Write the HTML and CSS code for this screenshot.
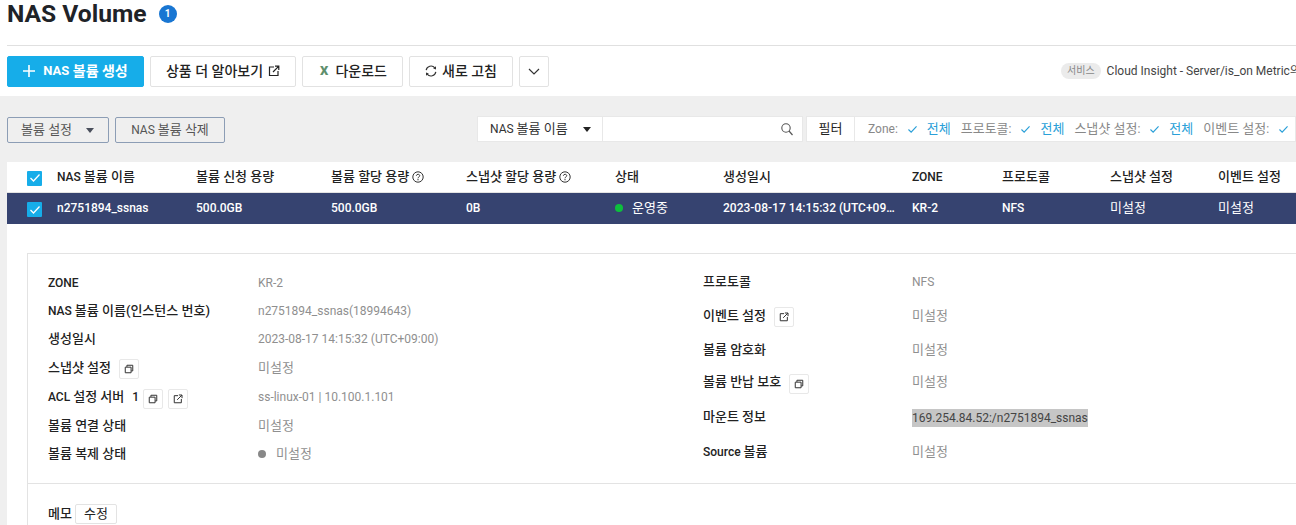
FILE: index.html
```html
<!DOCTYPE html>
<html lang="ko">
<head>
<meta charset="utf-8">
<title>NAS Volume</title>
<link rel="stylesheet" href="styles.css">
</head>
<body>
<svg class="defs" width="0" height="0">
  <defs>
    <symbol id="ext" viewBox="0 0 12 12"><path d="M6 2H1.500v8.500H10V6M7 1.200h3.800V5M10.600 1.400 5 7" fill="none" stroke="currentColor" stroke-width="1.200"/></symbol>
    <symbol id="copy" viewBox="0 0 12 12"><path d="M1.500 3.800h7v6.700h-7zM3.500 3.500V1.500h7v6.800H8.700" fill="none" stroke="currentColor" stroke-width="1.200"/></symbol>
    <symbol id="chk" viewBox="0 0 12 10"><path d="M1.500 5 4.500 8 10.500 1.500" fill="none" stroke="currentColor" stroke-width="1.300"/></symbol>
    <symbol id="help" viewBox="0 0 12 12"><circle cx="6" cy="6" r="5.200" fill="none" stroke="currentColor"/><path d="M4.400 4.800C4.400 2.800 7.700 2.800 7.700 4.700 7.700 6 6 5.900 6 7.300M6 8v1.300" fill="none" stroke="currentColor"/></symbol>
  </defs>
</svg>
<header class="title-bar">
  <h1 class="title">NAS Volume</h1>
  <span class="count">1</span>
</header>
<div class="toolbar">
  <button class="btn btn-primary"><svg class="plus" width="12" height="12" viewBox="0 0 12 12"><path d="M6 0v12M0 6h12" stroke="currentColor" stroke-width="1.600"/></svg><span class="lat">NAS</span>&nbsp;볼륨 생성</button>
  <button class="btn btn-learn">상품 더 알아보기<svg class="i12" width="12" height="12"><use href="#ext"/></svg></button>
  <button class="btn btn-down"><span class="xl">X</span>다운로드</button>
  <button class="btn btn-refresh"><svg class="i12" width="12" height="12" viewBox="0 0 12 12"><path d="M1.200 5.200A4.900 4.900 0 0 1 9.800 2.800M10.800 6.800A4.900 4.900 0 0 1 2.200 9.200" fill="none" stroke="#333" stroke-width="1.200"/><path d="M8.200 3.400 11 4.400V1.200zM3.800 8.600 1 7.600v3.200z" fill="#333"/></svg>새로 고침</button>
  <button class="btn btn-more"><svg width="12" height="7" viewBox="0 0 12 7"><path d="M1 1l5 5 5-5" fill="none" stroke="#333" stroke-width="1.200"/></svg></button>
  <div class="notice"><span class="pill">서비스</span><span class="notice-text">Cloud Insight - Server/is_on Metric의</span></div>
</div>
<main class="content">
  <div class="actions">
    <button class="act act-set"><span class="k">볼륨 설정</span><i class="caret"></i></button>
    <button class="act act-del">NAS <span class="k">볼륨 삭제</span></button>
    <div class="search">
      <div class="search-sel"><span>NAS <span class="k">볼륨 이름</span></span><i class="caret dark"></i></div>
      <div class="search-in"><svg width="12" height="13" viewBox="0 0 12 13"><circle cx="5" cy="5" r="4.200" fill="none" stroke="#555" stroke-width="1.100"/><path d="M8 8l3.500 4" stroke="#555" stroke-width="1.200"/></svg></div>
    </div>
    <div class="filter">
      <div class="filter-label k">필터</div>
      <div class="filter-items">
        <span class="f-name">Zone:</span><svg class="f-chk" width="11" height="9"><use href="#chk"/></svg><span class="f-val k">전체</span>
        <span class="f-name"><span class="k">프로토콜</span>:</span><svg class="f-chk" width="11" height="9"><use href="#chk"/></svg><span class="f-val k">전체</span>
        <span class="f-name"><span class="k">스냅샷 설정</span>:</span><svg class="f-chk" width="11" height="9"><use href="#chk"/></svg><span class="f-val k">전체</span>
        <span class="f-name"><span class="k">이벤트 설정</span>:</span><svg class="f-chk" width="11" height="9"><use href="#chk"/></svg>
      </div>
    </div>
  </div>
  <section class="panel">
    <div class="grid-row head">
      <span class="box"><svg width="12" height="10"><use href="#chk"/></svg></span>
      <span>NAS <span class="k">볼륨 이름</span></span><span class="k">볼륨 신청 용량</span>
      <span class="k">볼륨 할당 용량 <svg class="help" width="12" height="12"><use href="#help"/></svg></span>
      <span class="k">스냅샷 할당 용량 <svg class="help" width="12" height="12"><use href="#help"/></svg></span>
      <span class="k">상태</span><span class="k">생성일시</span><span>ZONE</span><span class="k">프로토콜</span><span class="k">스냅샷 설정</span><span class="k">이벤트 설정</span>
    </div>
    <div class="grid-row sel">
      <span class="box"><svg width="12" height="10"><use href="#chk"/></svg></span>
      <span>n2751894_ssnas</span><span>500.0GB</span><span>500.0GB</span><span>0B</span>
      <span class="state k"><i class="dot green"></i>운영중</span>
      <span class="ell">2023-08-17 14:15:32 (UTC+09:00)</span><span>KR-2</span><span>NFS</span><span class="k">미설정</span><span class="k">미설정</span>
    </div>
    <div class="detail">
      <div class="info">
        <dl class="col col-left">
          <div class="r"><dt>ZONE</dt><dd>KR-2</dd></div>
          <div class="r"><dt><span>NAS <span class="k">볼륨 이름(인스턴스 번호)</span></span></dt><dd>n2751894_ssnas(18994643)</dd></div>
          <div class="r"><dt class="k">생성일시</dt><dd>2023-08-17 14:15:32 (UTC+09:00)</dd></div>
          <div class="r"><dt class="k">스냅샷 설정<span class="ib ib-first"><svg width="10" height="10"><use href="#copy"/></svg></span></dt><dd class="k">미설정</dd></div>
          <div class="r"><dt><span>ACL <span class="k">설정 서버</span></span><b class="acl-n">1</b><span class="ib"><svg width="10" height="10"><use href="#copy"/></svg></span><span class="ib"><svg width="10" height="10"><use href="#ext"/></svg></span></dt><dd>ss-linux-01 | 10.100.1.101</dd></div>
          <div class="r"><dt class="k">볼륨 연결 상태</dt><dd class="k">미설정</dd></div>
          <div class="r"><dt class="k">볼륨 복제 상태</dt><dd class="k"><i class="dot gray"></i>미설정</dd></div>
        </dl>
        <dl class="col col-right">
          <div class="r"><dt class="k">프로토콜</dt><dd>NFS</dd></div>
          <div class="r up1"><dt class="k">이벤트 설정<span class="ib ib-first"><svg width="10" height="10"><use href="#ext"/></svg></span></dt><dd class="k">미설정</dd></div>
          <div class="r"><dt class="k">볼륨 암호화</dt><dd class="k">미설정</dd></div>
          <div class="r up2"><dt class="k">볼륨 반납 보호<span class="ib ib-first"><svg width="10" height="10"><use href="#copy"/></svg></span></dt><dd class="k">미설정</dd></div>
          <div class="r"><dt class="k dt-up">마운트 정보</dt><dd><span class="hl">169.254.84.52:/n2751894_ssnas</span></dd></div>
          <div class="r up1"><dt><span>Source <span class="k">볼륨</span></span></dt><dd class="k">미설정</dd></div>
        </dl>
      </div>
      <div class="memo"><span class="memo-l k">메모</span><button class="memo-btn k">수정</button></div>
    </div>
  </section>
</main>
</body>
</html>
```
FILE: styles.css
```css
* { box-sizing: border-box; }
html, body { margin: 0; height: 525px; overflow: hidden; }
body { width: 1296px; background: #fff; color: #222; font: 12px/16px Roboto, "Noto Sans CJK KR", sans-serif; }
button { font: inherit; color: inherit; background: #fff; padding: 0; cursor: pointer; }
.defs { position: absolute; }
.k { font-size: 13px; }

.title-bar { display: flex; align-items: center; height: 46px; margin-left: 7px; padding-bottom: 18px; border-bottom: 1px solid #e0e0e0; }
.title { margin: 0; font-size: 24.6px; line-height: 28px; font-weight: 700; color: #1f2328; }
.count { display: flex; align-items: center; justify-content: center; width: 18px; height: 18px; margin-left: 12px; border-radius: 50%; background: #1976d2; color: #fff; font-size: 10px; font-weight: 700; }

.toolbar { display: flex; gap: 6px; align-items: center; height: 50px; padding: 10px 0 10px 7px; white-space: nowrap; overflow: hidden; }
.btn { display: flex; align-items: center; justify-content: center; flex: none; height: 31px; border: 1px solid #e2e2e2; border-radius: 2px; font-size: 14px; font-weight: 500; color: #222; }
.btn-primary { width: 137px; background: #16ade9; border-color: #16ade9; color: #fff; font-weight: 700; }
.lat { font-size: 13px; }
.plus { margin-right: 8px; }
.btn-learn { width: 146px; }
.i12 { margin-left: 5px; }
.btn-down { width: 101px; padding-left: 2px; }
.xl { margin-right: 7px; color: #5f8f6d; font-weight: 900; font-size: 13px; }
.btn-refresh { width: 104px; }
.btn-refresh .i12 { margin: 0 5px 0 0; }
.btn-more { width: 30px; }
.notice { display: flex; align-items: center; margin-left: 506px; font-size: 12px; color: #444; }
.pill { height: 16px; padding: 0 6px; margin-right: 6px; border-radius: 8px; background: #ebebeb; color: #888; font-size: 10px; line-height: 16px; }

.content { height: 429px; padding: 20px 0 0 7px; background: #efefef; overflow: hidden; }
.actions { display: flex; align-items: flex-start; height: 46px; white-space: nowrap; }
.act { display: flex; align-items: center; height: 26px; margin-top: 1px; border: 1px solid #8c9db5; border-radius: 2px; background: #efefef; color: #555; }
.act-set { width: 102px; padding-left: 13px; }
.caret { display: inline-block; flex: none; width: 0; height: 0; margin-left: 14px; border: 4px solid transparent; border-top: 5px solid #4a4f5c; border-bottom: 0; }
.caret.dark { border-top-color: #222; margin-left: 15px; }
.act-del { width: 110px; margin-left: 6px; justify-content: center; gap: 3px; }
.search { display: flex; height: 26px; margin-left: 252px; background: #fff; border: 1px solid #e8e8e8; }
.search-sel { display: flex; align-items: center; width: 125px; padding-left: 12px; border-right: 1px solid #e8e8e8; color: #333; }
.search-in { display: flex; align-items: center; justify-content: flex-end; width: 199px; padding-right: 9px; }
.filter { display: flex; flex: 1; height: 26px; margin-left: 3px; background: #fff; border: 1px solid #e8e8e8; overflow: hidden; }
.filter-label { display: flex; align-items: center; justify-content: center; flex: none; width: 48px; border-right: 1px solid #e8e8e8; }
.filter-items { display: flex; align-items: center; padding-left: 13px; color: #888; }
.f-chk { flex: none; margin: 0 9px; color: #2a9fd8; }
.f-val { margin-right: 10px; color: #2a9fd8; }

.panel { height: 363px; background: #fff; }
.grid-row { display: grid; grid-template-columns: 20px 30px 139px 135px 135px 149px 108px 189px 90px 108px 108px 78px; align-items: center; white-space: nowrap; }
.grid-row > .box { grid-column: 2; }
.head { height: 31px; border-bottom: 1px solid #e3e3e3; font-weight: 500; color: #222; }
.sel { height: 31px; padding-bottom: 1px; background: #364370; color: #fff; font-weight: 500; }
.sel .k { font-weight: 400; }
.sel .box { margin-top: 3px; }
.box { display: flex; align-items: center; justify-content: center; width: 15px; height: 15px; margin-top: 2px; border-radius: 1px; background: #16ade9; color: #fff; }
.help { vertical-align: -2px; color: #333; }
.dot { display: inline-block; width: 8px; height: 8px; border-radius: 50%; }
.dot.green { margin-right: 9px; background: #0dbf3c; }
.dot.gray { margin-right: 10px; background: #888; }
.ell { display: block; width: 172px; overflow: hidden; text-overflow: ellipsis; }

.detail { margin: 29px 0 0 20px; height: 272px; border: 1px solid #e3e3e3; border-width: 1px 0 0 1px; }
.info { display: flex; height: 230px; padding: 15px 0 0 20px; border-bottom: 1px solid #e3e3e3; }
.col { margin: 0; display: flex; flex-direction: column; }
.col-left { width: 655px; }
.col-left .r { height: 28px; }
.col-left .r:nth-child(4) { height: 29px; }
.col-left .r:nth-child(5) { height: 30px; }
.col-right .r { height: 34px; }
.col-right { margin-top: -4px; }
.r { display: flex; align-items: center; }
.up1 { padding-bottom: 1px; }
.up2 { padding-bottom: 4px; }
.dt-up { padding-bottom: 2px; }
dt { display: flex; align-items: center; font-weight: 500; color: #222; }
.col-left dt { width: 210px; }
.col-right dt { width: 209px; }
dd { display: flex; align-items: center; margin: 0; color: #8f8f8f; }
.ib { display: flex; align-items: center; justify-content: center; flex: none; width: 20px; height: 20px; margin: 3px 0 0 5px; border: 1px solid #e8e8e8; border-radius: 2px; color: #333; }
.ib-first { margin-left: 8px; }
.acl-n { margin-left: 8px; margin-right: -1px; font-weight: 500; }
.hl { padding: 1px 0; background: #c6c6c6; color: #444; }
.memo { display: flex; align-items: center; padding: 20px 0 0 20px; }
.memo-l { font-weight: 500; }
.memo-btn { width: 42px; height: 20px; margin-left: 3px; border: 1px solid #e3e3e3; border-radius: 2px; }
```
